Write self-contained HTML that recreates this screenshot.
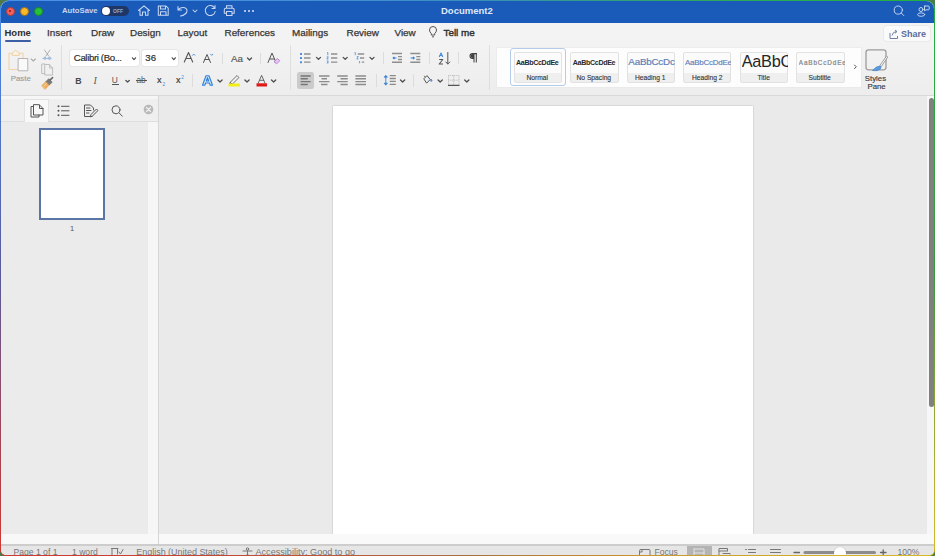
<!DOCTYPE html>
<html><head><meta charset="utf-8">
<style>
*{margin:0;padding:0;box-sizing:border-box}
html,body{width:935px;height:556px;overflow:hidden;background:#4d7a45;font-family:"Liberation Sans",sans-serif}
.a{position:absolute}
#win{position:absolute;left:0;top:0;width:935px;height:556px;border-radius:9px 9px 6px 6px;overflow:hidden;
 background:conic-gradient(from 0deg at 50% 50%,#3a8fc0 0deg,#30a860 40deg,#22b040 59deg,#3c9840 90deg,#d8b828 121deg,#c89030 150deg,#a87040 180deg,#d03830 239deg,#5a5a98 270deg,#4a80d8 295deg,#4a90e8 301deg,#3a8fc0 360deg)}
#in{position:absolute;left:1px;top:1px;width:933px;height:554px;border-radius:8px 8px 5px 5px;overflow:hidden;background:#f3f3f3}
svg{position:absolute;overflow:visible}
.t{position:absolute;white-space:nowrap;line-height:1}
.ms{-webkit-text-stroke:0.2px currentColor}
.sb{position:absolute;top:51.7px;width:48.5px;height:31.5px;border-radius:2px;border:0.8px solid #e2e2e2;background:linear-gradient(#fbfbfb 0,#fbfbfb 68%,#efefef 68%,#efefef 100%)}
.sl{top:74.6px;font-size:6.7px;color:#333;-webkit-text-stroke:0.12px #333}
</style></head><body>
<div id="win"><div id="in">
<!-- everything inside #in uses coords offset by -1 -->
<div class="a" style="left:-1px;top:-1px;width:935px;height:556px">

 <!-- TITLE BAR -->
 <div class="a" style="left:0;top:0;width:935px;height:22.6px;background:#1a5ab8"></div>
 <div class="a" style="left:5.7px;top:6.7px;width:9px;height:9px;border-radius:50%;background:#f4605a;border:0.6px solid #b03a36"></div><div class="a" style="left:9.2px;top:10.2px;width:2px;height:2px;border-radius:50%;background:#8a1a18"></div>
 <div class="a" style="left:19.6px;top:6.7px;width:9px;height:9px;border-radius:50%;background:#f8b828;border:0.6px solid #a07018"></div>
 <div class="a" style="left:33.7px;top:6.7px;width:9px;height:9px;border-radius:50%;background:#28c038;border:0.6px solid #158a20"></div>
 <div class="t" style="left:62px;top:7.3px;font-size:7.7px;font-weight:bold;color:#c6d5f0">AutoSave</div>
 <div class="a" style="left:101px;top:6px;width:28px;height:10px;border-radius:5px;background:#1f3766"></div>
 <div class="a" style="left:101.8px;top:7px;width:8.2px;height:8.2px;border-radius:50%;background:#fff"></div>
 <div class="t" style="left:113px;top:8.5px;font-size:5px;font-weight:bold;color:#9eaac0">OFF</div>
 <svg style="left:0;top:0" width="935" height="22" fill="none" stroke="#c8d8f3" stroke-width="1.05" stroke-linecap="round" stroke-linejoin="round">
  <!-- home -->
  <path d="M138.5 10.5 L144 5.8 L149.5 10.5 M140 9.3 V15.3 H142.5 V12 H145.5 V15.3 H148 V9.3"/>
  <!-- save -->
  <path d="M158.3 6 H166 L168.2 8.2 V15.2 H158.3 Z M160.5 6 V9 H165.5 V6 M160.5 15.2 V11.8 H166 V15.2"/>
  <!-- undo -->
  <path d="M178 6.5 V10 H181.5 M178.3 9.8 C180 6.8 186.5 6.2 187 10.5 C187.3 13 184 15.5 180.5 16"/>
  <path d="M193 10 L195 12 L197 10"/>
  <!-- redo circle -->
  <path d="M214.6 8 A5 5 0 1 0 215.2 11.5 M215 5.5 V8.5 H212"/>
  <!-- print -->
  <path d="M226.5 8.3 V5.8 H232 V8.3 M224.3 13.3 V9.8 Q224.3 8.3 225.8 8.3 H232.7 Q234.2 8.3 234.2 9.8 V13.3 H232 M226.5 13.3 H224.3 M226.5 11.5 H232 V15.5 H226.5 Z"/>
 </svg>
 <div class="a" style="left:244px;top:10px;width:2px;height:2px;border-radius:50%;background:#dbe5f7"></div>
 <div class="a" style="left:248px;top:10px;width:2px;height:2px;border-radius:50%;background:#dbe5f7"></div>
 <div class="a" style="left:252px;top:10px;width:2px;height:2px;border-radius:50%;background:#dbe5f7"></div>
 <div class="t" style="left:441px;top:6.3px;font-size:9.5px;font-weight:bold;color:#dfe8f8">Document2</div>
 <svg style="left:0;top:0" width="935" height="22" fill="none" stroke="#c2d4f2" stroke-width="1" stroke-linecap="round">
  <circle cx="898.3" cy="10.1" r="4.1"/><path d="M901.3 13.1 L903.8 15.6"/>
  <circle cx="921" cy="9.5" r="2"/><ellipse cx="921.2" cy="14.6" rx="3.6" ry="1.7"/>
  <path d="M924.3 6 H928.5 Q929.2 6 929.2 6.8 V9 Q929.2 9.8 928.5 9.8 H926 L924.5 10.8 V6.8 Q924.5 6 925 6"/>
 </svg>

 <!-- TABS -->
 <div class="t" style="left:4.5px;top:28.4px;font-size:9.5px;font-weight:bold;color:#2e2e2e">Home</div>
 <div class="a" style="left:5px;top:40px;width:26px;height:2px;border-radius:1px;background:#3d5fa6"></div>
 <div class="t" style="left:47px;top:28.2px;font-size:9.9px;color:#353535;-webkit-text-stroke:0.25px #353535">Insert</div>
 <div class="t" style="left:91px;top:28.2px;font-size:9.9px;color:#353535;-webkit-text-stroke:0.25px #353535">Draw</div>
 <div class="t" style="left:130px;top:28.2px;font-size:9.9px;color:#353535;-webkit-text-stroke:0.25px #353535">Design</div>
 <div class="t" style="left:177.5px;top:28.2px;font-size:9.9px;color:#353535;-webkit-text-stroke:0.25px #353535">Layout</div>
 <div class="t" style="left:224.5px;top:28.2px;font-size:9.9px;color:#353535;-webkit-text-stroke:0.25px #353535">References</div>
 <div class="t" style="left:292px;top:28.2px;font-size:9.9px;color:#353535;-webkit-text-stroke:0.25px #353535">Mailings</div>
 <div class="t" style="left:346.5px;top:28.2px;font-size:9.9px;color:#353535;-webkit-text-stroke:0.25px #353535">Review</div>
 <div class="t" style="left:394.5px;top:28.2px;font-size:9.9px;color:#353535;-webkit-text-stroke:0.25px #353535">View</div>
 <svg style="left:0;top:0" width="935" height="45" fill="none" stroke="#555" stroke-width="1">
  <path d="M431.3 35 V33.5 Q429.5 32 429.5 30 A3.5 3.5 0 0 1 436.5 30 Q436.5 32 434.7 33.5 V35 Z M432 36.8 H434"/>
 </svg>
 <div class="t" style="left:443.5px;top:28.2px;font-size:9.9px;color:#303030;-webkit-text-stroke:0.4px #303030">Tell me</div>
 <!-- share -->
 <div class="a" style="left:883.5px;top:26px;width:46px;height:15px;border-radius:3px;background:#fafafa;box-shadow:0 0 0 0.5px #e2e2e2"></div>
 <svg style="left:0;top:0" width="935" height="45" fill="none" stroke="#6f7fa8" stroke-width="1">
  <path d="M890 33 V38.5 H897.5 V36 M892 35.5 Q893 31.5 896.5 31.5 M895 30 L897 31.5 L895 33.3"/>
 </svg>
 <div class="t" style="left:901px;top:30px;font-size:9px;font-weight:bold;color:#5a6c9c">Share</div>

 <!-- RIBBON -->
 <div class="a" style="left:0;top:44px;width:935px;height:51px;background:linear-gradient(#f3f3f3,#ededed)"></div>
 <div class="a" style="left:0;top:95px;width:935px;height:1px;background:#d9d9d9"></div>
 <!-- clipboard group -->
 <svg style="left:0;top:0" width="935" height="95" fill="none" stroke-linecap="round" stroke-linejoin="round">
  <path d="M12.5 53.3 H9 V69.5 H18 M19 53.3 H23 V58" stroke="#f3d3a6" stroke-width="1.1"/>
  <path d="M12.3 55 V53 L15.7 50.3 L19.2 53 V55 Z" stroke="#f0d0a4" stroke-width="1" fill="#fbf3e6"/>
  <rect x="18.5" y="58.5" width="9.3" height="12.3" stroke="#b4b4b4" stroke-width="1" fill="#f9f9f9"/>
  <!-- scissors -->
  <path d="M44.5 50 L48.6 56 M50 50 L45.9 56" stroke="#a8a8a8" stroke-width="0.9"/>
  <path d="M43.3 58.5 Q45 55.5 46.5 58.5 Q45 60.3 43.3 58.5 Z M47.8 58.5 Q49.5 55.5 51.2 58.5 Q49.5 60.3 47.8 58.5 Z" stroke="#8fb0d8" stroke-width="0.9" fill="#b8cde8"/>
  <!-- copy -->
  <path d="M44.7 64 H41.7 V73.5 H44.7" stroke="#bdbdbd" stroke-width="1"/>
  <path d="M44.7 64.8 V75 H52.6 V68 L49.6 64.8 Z M49.6 64.8 V68 H52.6" stroke="#bdbdbd" stroke-width="1"/>
  <!-- format painter -->
  <path d="M41.8 85.5 L46.2 81.3 L49.6 84.7 L45.2 89.2 Z" fill="#f0b060" stroke="#e9a450" stroke-width="0.7"/>
  <path d="M43.8 86.2 L46.4 83.6" stroke="#fbe0b8" stroke-width="0.8"/>
  <path d="M46.2 81.3 L48.8 78.7 L52.2 82.1 L49.6 84.7 Z" fill="#7a7a7a" stroke="#6a6a6a" stroke-width="0.7"/>
  <path d="M50.2 79.8 L52.6 77.6" stroke="#6a6a6a" stroke-width="1.6"/>
 </svg>
 <div class="t" style="left:10.8px;top:75.2px;font-size:7.8px;color:#9c9c9c;-webkit-text-stroke:0.15px #9c9c9c">Paste</div>
 <svg style="left:0;top:0" width="60" height="95"><path d="M31.2 59 L33.3 61 L35.4 59" fill="none" stroke="#a8a8a8" stroke-width="1.1" stroke-linecap="round" stroke-linejoin="round"/></svg>
 <div class="a" style="left:61.3px;top:45px;width:1px;height:45px;background:#dedede"></div>

 <!-- font group -->
 <div class="a" style="left:70px;top:50.2px;width:68.5px;height:15.8px;border-radius:2.5px;background:#fff;box-shadow:0 0 0 0.8px #e2e2e2"></div>
 <div class="t ms" style="left:73.8px;top:53.2px;font-size:9.6px;color:#2e2e2e;letter-spacing:-0.35px">Calibri (Bo...</div>
 <div class="a" style="left:142px;top:50.2px;width:36px;height:15.8px;border-radius:2.5px;background:#fff;box-shadow:0 0 0 0.8px #e2e2e2"></div>
 <div class="t ms" style="left:145.3px;top:53.2px;font-size:9.6px;color:#2e2e2e">36</div>
 <svg style="left:0;top:0" width="935" height="95" fill="none" stroke="#555" stroke-width="1" stroke-linecap="round" stroke-linejoin="round">
  
  <!-- grow A -->
  <path d="M184.3 62 L188.5 52.5 L192.7 62 M186 58.5 H191" stroke-width="1.1"/>
  <path d="M192.6 55.3 L193.7 54 L194.8 55.3" stroke="#4a8ad8" stroke-width="0.9"/>
  <!-- shrink A -->
  <path d="M203.5 62.5 L207 54.5 L210.5 62.5 M204.8 59.5 H209.2" stroke-width="1"/>
  <path d="M210.6 54.2 L211.7 55.4 L212.8 54.2" stroke="#4a8ad8" stroke-width="0.9"/>
  <!-- Aa -->
  
  
  <!-- clear formatting -->
  <path d="M268 62.5 L272 53 L276 62.5 M269.6 59 H274.4" stroke-width="1"/>
  <path d="M274.3 61.6 L277.2 58.5 L279.8 60.6 L277 63.6 Z" fill="#e6c6f4" stroke="#b070d0" stroke-width="0.8"/>
 </svg>
 <div class="a" style="left:221.5px;top:53px;width:1px;height:11px;background:#dcdcdc"></div>
 <div class="a" style="left:259.5px;top:53px;width:1px;height:11px;background:#dcdcdc"></div>
 <div class="t" style="left:75.3px;top:76.6px;font-size:8.8px;font-weight:bold;color:#4a4a4a">B</div>
 <div class="t" style="left:93.5px;top:75.8px;font-size:10px;font-style:italic;color:#5a5a5a;font-family:'Liberation Serif',serif">I</div>
 <div class="t" style="left:111.8px;top:75.5px;font-size:8.4px;color:#555">U</div>
 <div class="a" style="left:111.5px;top:84.3px;width:7px;height:0.8px;background:#555"></div>
 <div class="t" style="left:136.5px;top:76.8px;font-size:8.2px;color:#555">ab</div>
 <div class="a" style="left:136px;top:80.3px;width:11px;height:0.9px;background:#555"></div>
 <div class="t" style="left:157px;top:76.3px;font-size:9px;color:#3a3a3a;-webkit-text-stroke:0.2px #3a3a3a">x</div>
 <div class="t" style="left:162.6px;top:82.8px;font-size:4.8px;color:#4a8ad8">2</div>
 <div class="t" style="left:176px;top:76.3px;font-size:9px;color:#3a3a3a;-webkit-text-stroke:0.2px #3a3a3a">x</div>
 <div class="t" style="left:181.3px;top:76px;font-size:4.8px;color:#4a8ad8">2</div>
 <div class="a" style="left:192px;top:74px;width:1px;height:13px;background:#dcdcdc"></div>
 <svg style="left:0;top:0" width="935" height="95" fill="none" stroke="#555" stroke-width="1" stroke-linecap="round" stroke-linejoin="round">
  
  <!-- highlighter -->
  <path d="M230.5 82 L237 75.5 L239 77.5 L232.5 84 Z M230.5 82 L229.5 84 L232.5 84" stroke="#666" stroke-width="0.9"/>
  <rect x="228.5" y="83.5" width="11.5" height="3" fill="#f2ee1a" stroke="none"/>
  <!-- font color -->
  <path d="M258.3 83 L261.6 75.3 L264.9 83 M259.5 80.3 H263.7" stroke="#666" stroke-width="1"/>
  <rect x="256.5" y="83.3" width="10.5" height="3.2" fill="#e01818" stroke="none"/>
 </svg>
 <div class="a" style="left:289.5px;top:45px;width:1px;height:45px;background:#dedede"></div>

 <!-- paragraph group -->
 <svg style="left:0;top:0" width="935" height="95" fill="none" stroke="#8e8e8e" stroke-width="1.45" stroke-linecap="butt" stroke-linejoin="round">
  <!-- bullets -->
  <g fill="#4a8ad8" stroke="none"><rect x="300" y="53" width="2" height="2" rx="0.5"/><rect x="300" y="57" width="2" height="2" rx="0.5"/><rect x="300" y="61.2" width="2" height="2" rx="0.5"/></g>
  <path d="M304 53.9 H310.5 M304 57.9 H310.5 M304 62.1 H310.5"/>
  <!-- numbering -->
  <path d="M327 52.5 H327.8 V55.2 M326.8 56.8 H328.3 L326.8 59 H328.5 M326.8 61 H328.3 L327.5 62 L328.3 63 H326.8" stroke="#4a8ad8" stroke-width="0.8"/>
  <path d="M331 53.9 H337.3 M331 57.9 H337.3 M331 62.1 H337.3"/>
  <!-- multilevel -->
  <path d="M354.6 52.5 H355.3 V55.2 M356.8 56.6 H358.3 L356.8 59 H358.5 M359.6 61 V63.3" stroke="#4a8ad8" stroke-width="0.8"/>
  <path d="M357.7 53.9 H364.2 M360 57.9 H364.2 M361.8 62.1 H364.2"/>
  <!-- decrease indent -->
  <path d="M392 53.5 H402 M398 56.6 H402 M398 59.4 H402 M392 62.3 H402"/>
  <path d="M396.5 58 H393.3 M394.4 56.8 L393.2 58 L394.4 59.2" stroke="#3a82d8" stroke-width="1.2"/>
  <!-- increase indent -->
  <path d="M410.3 53.5 H420.3 M416.3 56.6 H420.3 M416.3 59.4 H420.3 M410.3 62.3 H420.3"/>
  <path d="M410.6 58 H414.2 M413 56.8 L414.2 58 L413 59.2" stroke="#3a82d8" stroke-width="1.2"/>
  <!-- sort -->
  <path d="M439.2 57 L441 52.8 L442.8 57 M439.8 55.6 H442.2" stroke="#3a82d8" stroke-width="1"/>
  <path d="M439.2 59.5 H442.8 L439.2 64 H443" stroke="#555" stroke-width="1.05"/>
  <path d="M447.8 52.5 V64 M445.8 62 L447.8 64 L449.8 62" stroke="#555" stroke-width="1" stroke-linecap="round"/>
  <!-- pilcrow -->
  <path d="M474 53.6 V62.5 M476.3 53.6 V62.5 M477 53.6 H472.5 Q470 53.6 470 56 Q470 58.4 472.5 58.4 H474" stroke="#444" stroke-width="1.05"/>
  <path d="M472.5 54 Q470.5 54 470.5 56 Q470.5 58 472.5 58 H474 V54 Z" fill="#444" stroke="none"/>
 </svg>
 <div class="a" style="left:382.5px;top:52px;width:1px;height:12px;background:#dcdcdc"></div>
 <div class="a" style="left:429px;top:52px;width:1px;height:12px;background:#dcdcdc"></div>
 <div class="a" style="left:458.4px;top:52px;width:1px;height:12px;background:#dcdcdc"></div>
 <div class="a" style="left:297.2px;top:72.3px;width:16.4px;height:16.4px;border-radius:2.5px;background:#cbcbcb"></div>
 <div class="a" style="left:375.5px;top:74px;width:1px;height:13px;background:#dcdcdc"></div>
 <div class="a" style="left:412.5px;top:74px;width:1px;height:13px;background:#dcdcdc"></div>
 <svg style="left:0;top:0" width="935" height="95" fill="none" stroke="#8a8a8a" stroke-width="1.4" stroke-linecap="butt">
  <path d="M300.6 76 H310.7 M300.6 78.8 H307.8 M300.6 81.6 H310.7 M300.6 84.5 H307.8" stroke="#777"/>
  <path d="M319 76 H329.5 M321.5 78.8 H327 M319 81.6 H329.5 M321 84.5 H327.5" stroke="#8c8c8c"/>
  <path d="M337.2 76 H347.7 M340.5 78.8 H347.7 M337.2 81.6 H347.7 M340.5 84.5 H347.7" stroke="#8c8c8c"/>
  <path d="M355.4 76 H366 M355.4 78.8 H366 M355.4 81.6 H366 M355.4 84.5 H366" stroke="#8c8c8c"/>
  <!-- line spacing -->
  <path d="M389.7 75.6 H395.8 M389.7 78.5 H395.8 M389.7 81.4 H395.8 M389.7 84.4 H395.8"/>
  <path d="M385.8 76.5 V84" stroke="#3a82d8" stroke-width="0.9"/>
  <path d="M384.2 77.2 L385.8 75.3 L387.4 77.2 Z M384.2 83.2 L385.8 85.2 L387.4 83.2 Z" fill="#3a82d8" stroke="#3a82d8" stroke-width="0.8"/>
  <!-- shading bucket -->
  <path d="M423.8 78.8 L427 75.6 L430.2 79.5 L426.6 83.2 Z" stroke="#555" stroke-width="1"/>
  <path d="M425.3 77.3 L424.3 75.8" stroke="#555" stroke-width="0.9"/>
  <path d="M431.2 79.6 V81.8 M430.2 80.6 L431.2 79.4 L432.2 80.6" stroke="#3a72c0" stroke-width="1"/>
  <!-- borders -->
  <path d="M448.5 75.5 H459 M448.5 75.5 V85 M459 75.5 V85 M453.7 75.5 V85 M448.5 80.2 H459" stroke="#b8b8b8" stroke-width="0.9" stroke-dasharray="1 0.8"/>
  <path d="M448 85.4 H459.5" stroke="#555" stroke-width="1.2"/>
 </svg>
 <div class="a" style="left:489px;top:45px;width:1px;height:45px;background:#dedede"></div>

 <!-- styles gallery -->
 <div class="a" style="left:497px;top:47.5px;width:363.5px;height:39px;background:#fdfdfd;box-shadow:0 0 0 0.5px #e6e6e6"></div>
 <div class="a" style="left:509.6px;top:48px;width:56px;height:38px;border-radius:3px;border:1.8px solid #b4cbea"></div>
 <div class="sb" style="left:513.5px"></div>
 <div class="sb" style="left:570px"></div>
 <div class="sb" style="left:626.5px"></div>
 <div class="sb" style="left:682.5px"></div>
 <div class="sb" style="left:739.5px"></div>
 <div class="sb" style="left:796px"></div>
 <div class="t sn" style="left:516px;top:60.4px;font-size:7.1px;font-weight:bold;color:#2a2a2a;letter-spacing:-0.33px">AaBbCcDdEe</div>
 <div class="t sl" style="left:526.5px">Normal</div>
 <div class="t sn" style="left:572.8px;top:60.4px;font-size:7.1px;font-weight:bold;color:#2a2a2a;letter-spacing:-0.33px">AaBbCcDdEe</div>
 <div class="t sl" style="left:576.5px">No Spacing</div>
 <div class="t" style="left:628.3px;top:57.3px;font-size:9.8px;color:#5f7fb6;width:46.5px;overflow:hidden;letter-spacing:-0.2px;-webkit-text-stroke:0.2px #5f7fb6">AaBbCcDc</div>
 <div class="t sl" style="left:635px">Heading 1</div>
 <div class="t" style="left:685px;top:58.5px;font-size:7.9px;color:#5f7fb6;width:46px;overflow:hidden;letter-spacing:-0.2px;-webkit-text-stroke:0.15px #5f7fb6">AaBbCcDdEe</div>
 <div class="t sl" style="left:692px">Heading 2</div>
 <div class="t" style="left:741.8px;top:53.1px;font-size:16.3px;color:#262626;width:46.5px;overflow:hidden;letter-spacing:-0.3px">AaBbC</div>
 <div class="t sl" style="left:757.5px">Title</div>
 <div class="t" style="left:798.8px;top:59.6px;font-size:6.4px;color:#858585;letter-spacing:0.85px;width:46px;overflow:hidden;-webkit-text-stroke:0.2px #858585">AaBbCcDdEe</div>
 <div class="t sl" style="left:808.5px">Subtitle</div>
 <svg style="left:0;top:0" width="935" height="95" fill="none" stroke="#555" stroke-width="1" stroke-linecap="round" stroke-linejoin="round">
  <path d="M854.5 65 L856.3 66.8 L854.5 68.6"/>
  <rect x="866" y="49.8" width="20" height="20" rx="2.5" stroke="#9c9c9c" stroke-width="1.3"/>
  <path d="M879 66.8 L886.5 56 L887.8 57 L880.6 67.6 Z" fill="#f4f4f4" stroke="#8a8a8a" stroke-width="0.8"/>
  <path d="M880.3 66.3 Q876.5 66 874.5 68.5 L872.5 70.6 Q877.5 71.5 880.2 69.2 Q881.5 68 880.3 66.3 Z" fill="#5a9be0" stroke="#3f7fcc" stroke-width="0.6"/>
 </svg>
 <div class="t" style="left:864.8px;top:75px;font-size:7.8px;color:#3a3a3a;-webkit-text-stroke:0.15px #3a3a3a">Styles</div>
 <div class="t" style="left:867.5px;top:82.8px;font-size:7.8px;color:#3a3a3a;-webkit-text-stroke:0.15px #3a3a3a">Pane</div>

 <!-- NAV PANE -->
 <div class="a" style="left:0;top:96px;width:158px;height:448px;background:#f6f6f6"></div>
 <div class="a" style="left:0;top:99px;width:158px;height:22.5px;background:#efefef;border-bottom:1px solid #dedede"></div>
 <div class="a" style="left:24.2px;top:99.2px;width:24.8px;height:22.8px;background:#f8f8f8;border:1px solid #e2e2e2;border-bottom:none"></div>
 <div class="a" style="left:0;top:122px;width:147.5px;height:412.5px;background:#ebebeb"></div>
 <div class="a" style="left:158px;top:96px;width:1px;height:448.5px;background:#d6d6d6"></div>
 <svg style="left:0;top:0" width="170" height="130" fill="none" stroke="#555" stroke-width="1" stroke-linecap="round" stroke-linejoin="round">
  <!-- pages icon -->
  <path d="M33.5 106.5 H31 V117 H39 V115" stroke-width="1"/>
  <path d="M33.5 105 V115 H43 V108.5 L39.5 105 Z M39.5 105 V108.5 H43" stroke-width="1"/>
  <!-- list -->
  <g fill="#555" stroke="none"><circle cx="58.5" cy="106.3" r="1"/><circle cx="58.5" cy="110.8" r="1"/><circle cx="58.5" cy="115.3" r="1"/></g>
  <path d="M61.5 106.3 H69 M61.5 110.8 H69 M61.5 115.3 H69"/>
  <!-- edit page -->
  <path d="M92 116.5 H84.5 V105 H90.5 L93.5 108 V110" />
  <path d="M86.5 108 H90 M86.5 110.5 H91 M86.5 113 H89"/>
  <path d="M90.5 116.5 L91 114.5 L96.5 109 L98 110.5 L92.5 116 Z"/>
  <!-- search -->
  <circle cx="116" cy="109.8" r="4"/><path d="M119 112.8 L122.3 116.2"/>
  <!-- close -->
  <circle cx="148.5" cy="109.5" r="4.8" fill="#b9b9b9" stroke="none"/>
  <path d="M146.5 107.5 L150.5 111.5 M150.5 107.5 L146.5 111.5" stroke="#efefef" stroke-width="1.2"/>
 </svg>
 <div class="a" style="left:39px;top:127.5px;width:66px;height:92.5px;background:#fff;border:2px solid #5b76a6"></div>
 <div class="t" style="left:70px;top:225.3px;font-size:7.5px;color:#555">1</div>

 <!-- DOC AREA -->
 <div class="a" style="left:159px;top:96px;width:768px;height:438px;background:#eaeaea"></div>
 <div class="a" style="left:159px;top:534px;width:776px;height:10.5px;background:#f9f9f9"></div>
 <div class="a" style="left:333px;top:106px;width:420px;height:428px;background:#fff;box-shadow:0 0 1.5px rgba(0,0,0,0.28);clip-path:inset(-3px -3px 0 -3px)"></div>
 <div class="a" style="left:0;top:534px;width:158px;height:10.5px;background:#f8f8f8"></div>
 <!-- v scrollbar -->
 <div class="a" style="left:927px;top:96px;width:8px;height:438px;background:#f7f7f7"></div>
 <div class="a" style="left:929px;top:98px;width:4.5px;height:309px;border-radius:2.5px;background:#808080"></div>

 <!-- STATUS BAR -->
 <div class="a" style="left:0;top:544px;width:935px;height:1.5px;background:#cdcdcd"></div>
 <div class="a" style="left:0;top:545.5px;width:935px;height:11px;background:#e6e6e6"></div>
 <div class="t" style="left:13.5px;top:548px;font-size:8.6px;color:#777">Page 1 of 1</div>
 <div class="t" style="left:72px;top:548px;font-size:8.6px;color:#777">1 word</div>
 <div class="t" style="left:136.3px;top:547.8px;font-size:8.95px;color:#777">English (United States)</div>
 <div class="t" style="left:255.5px;top:547.8px;font-size:9.1px;color:#777">Accessibility: Good to go</div>
 <div class="t" style="left:654.5px;top:548px;font-size:8.6px;color:#777">Focus</div>
 <div class="t" style="left:897.5px;top:548px;font-size:8.6px;color:#777">100%</div>
 <div class="a" style="left:686.5px;top:545.5px;width:25.5px;height:11px;background:#b4b4b4"></div>
 <svg style="left:0;top:530" width="935" height="26" fill="none" stroke="#777" stroke-width="1" stroke-linecap="round" stroke-linejoin="round">
  <!-- proofing -->
  <path d="M111.5 18.5 H118 M112 18.5 V27 M117.5 18.5 V24 M119 22 L120.5 24 L123 19.5"/>
  <!-- accessibility -->
  <circle cx="247.5" cy="19" r="1.2"/><path d="M243 21 H252 M247.5 21 V27 M245.5 27 L247.5 24 L249.5 27"/>
  <!-- focus -->
  <rect x="639.5" y="19.5" width="10.5" height="8" rx="1"/>
  <path d="M642 19.5 V22 H639.5"/>
  <!-- print layout (active) -->
  <path d="M694 19 H704 V27 M694 19 V27 M694 23 H704" stroke="#e4e4e4"/>
  <!-- web layout -->
  <path d="M719 26 V18.5 H727.5 V21 M719 21 H727 M723 23.5 L730 23.5 M724 25.5 L726 27.5 L730 25" />
  <!-- outline -->
  <path d="M745.5 19.5 H746.5 M748.5 19.5 H755.5 M748.5 22.5 H755.5 M750.5 25.5 H755.5 M748.5 28 H755.5"/>
  <!-- draft -->
  <path d="M770.5 19.5 H780.5 M770.5 22.5 H780.5 M770.5 25.5 H777.5"/>
  <!-- zoom -->
  <path d="M794 22.5 H799.5 M880.5 22.5 H886 M883.2 19.8 V25.2" stroke="#666" stroke-width="1.3"/>
  <path d="M805 22.5 H874.5" stroke="#8c8c8c" stroke-width="3"/>
 </svg>
 <div class="a" style="left:834px;top:547px;width:11.5px;height:11.5px;border-radius:50%;background:#fff;box-shadow:0 0 1px rgba(0,0,0,0.3)"></div>

 <svg style="left:0;top:0" width="935" height="95" fill="none" stroke="#4e4e4e" stroke-width="1.3" stroke-linecap="round" stroke-linejoin="round"><path d="M132.4 57.8 L134.0 59.6 L135.6 57.8 M172.2 57.8 L173.8 59.6 L175.4 57.8" stroke-width="1.2"/><path d="M247.5 58.0 L249.5 60.0 L251.5 58.0 M316.5 57.4 L318.5 59.4 L320.5 57.4 M343.2 57.4 L345.2 59.4 L347.2 57.4 M370.0 57.4 L372.0 59.4 L374.0 57.4 M125.9 80.5 L127.6 82.0 L129.3 80.5 M217.9 80.0 L220.0 82.0 L222.1 80.0 M244.9 80.0 L247.0 82.0 L249.1 80.0 M271.5 80.0 L273.6 82.0 L275.7 80.0 M400.5 80.0 L402.6 82.0 L404.7 80.0 M438.1 80.0 L440.2 82.0 L442.3 80.0 M464.7 80.0 L466.8 82.0 L468.9 80.0"/></svg>

 <div class="t" style="left:231px;top:54.3px;font-size:9.8px;color:#555;-webkit-text-stroke:0.15px #555">Aa</div>

 <svg style="left:0;top:0" width="300" height="95"><path d="M202.5 85.3 L206 75.7 L209 75.7 L212.5 85.3 L210.2 85.3 L209.4 83 L205.6 83 L204.8 85.3 Z M206.3 81 L208.7 81 L207.5 77.6 Z" fill="#d2e8fc" fill-rule="evenodd" stroke="#2f7fd8" stroke-width="1.1" stroke-linejoin="round"/></svg>
</div>
</div></div>
</body></html>
